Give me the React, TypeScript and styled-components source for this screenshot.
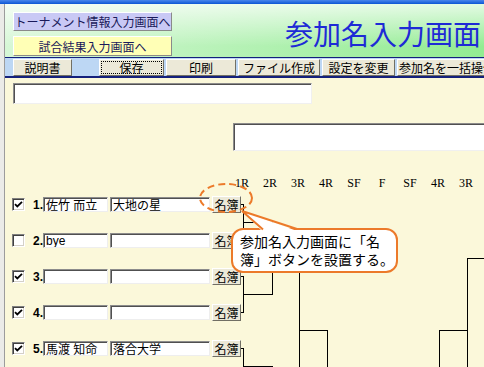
import styled, { createGlobalStyle } from "styled-components";

const GlobalStyle = createGlobalStyle`
  html, body {
    margin: 0;
    padding: 0;
  }
  body {
    width: 484px;
    height: 367px;
    overflow: hidden;
    background: #fbf8da;
    font-family: "Liberation Sans", "Noto Sans CJK JP", sans-serif;
  }
  * {
    box-sizing: border-box;
  }
`;

const JP = `"Liberation Sans", "Noto Sans CJK JP", sans-serif`;
const ORANGE = "#ec7a2a";

const Page = styled.div`
  width: 484px;
  height: 367px;
  display: flex;
  flex-direction: column;
  position: relative;
  overflow: hidden;
`;

const TitleBar = styled.div`
  height: 4px;
  flex-shrink: 0;
  background: linear-gradient(to bottom, #4a86ec, #0b55d4);
`;

const Frame = styled.div`
  flex: 1;
  display: flex;
  min-height: 0;
`;

const SideStrip = styled.div`
  width: 5px;
  flex-shrink: 0;
  background: #ebebe8;
  border-right: 1px solid #9c9c9c;
`;

const Main = styled.div`
  flex: 1;
  min-width: 0;
  display: flex;
  flex-direction: column;
  background: #fbf8da;
`;

// ---------- header ----------
const Header = styled.div`
  height: 53px;
  flex-shrink: 0;
  display: flex;
  justify-content: space-between;
  padding: 8px 3px 0 8px;
  background: linear-gradient(to bottom, rgba(255, 255, 255, 0.75), rgba(255, 255, 255, 0) 80%),
    linear-gradient(to right, #d6f7d6, #92ec92);
`;

const JumpButtons = styled.div`
  display: flex;
  flex-direction: column;
  gap: 5px;
`;

const JumpButton = styled.div<{ $bg: string; $h: number }>`
  width: 159px;
  height: ${(p) => p.$h}px;
  display: flex;
  align-items: center;
  justify-content: center;
  background: ${(p) => p.$bg};
  border: 1px solid;
  border-color: #ffffff #8a8a8a #8a8a8a #ffffff;
  font-family: ${JP};
  font-size: 12px;
  color: #1a1a5a;
  white-space: nowrap;
`;

const Title = styled.h1`
  margin: 7px 0 0 0;
  font-family: "Noto Sans CJK JP", sans-serif;
  font-weight: 400;
  font-size: 28px;
  line-height: 28px;
  color: #1e2ad6;
  white-space: nowrap;
`;

// ---------- toolbar ----------
const Toolbar = styled.div`
  height: 21px;
  flex-shrink: 0;
  display: flex;
  align-items: center;
  gap: 2px;
  padding-left: 8px;
  background: #bdd7f4;
  border-top: 1px solid #14207c;
  border-bottom: 2px solid #14207c;
  overflow: hidden;
`;

const ToolButton = styled.div<{ $w: number; $focus?: boolean; $gapAfter?: number }>`
  width: ${(p) => p.$w}px;
  height: 17px;
  flex-shrink: 0;
  margin-right: ${(p) => p.$gapAfter ?? 0}px;
  display: flex;
  align-items: center;
  justify-content: center;
  background: #ece9d8;
  border: 1px solid;
  border-color: #ffffff #716f64 #716f64 #ffffff;
  font-family: ${JP};
  font-size: 12px;
  color: #000;
  white-space: nowrap;
  outline: ${(p) => (p.$focus ? "1px dotted #000" : "none")};
  outline-offset: -3px;
`;

// ---------- content ----------
const SunkenBox = styled.div<{ $w: number; $h: number }>`
  width: ${(p) => p.$w}px;
  height: ${(p) => p.$h}px;
  flex-shrink: 0;
  background: #fff;
  border: 1px solid;
  border-color: #8c8c8c #f0f0f0 #f0f0f0 #8c8c8c;
  box-shadow: inset 1px 1px #505050;
`;

const TopField = styled(SunkenBox)`
  margin: 5px 0 0 8px;
`;

const RoundsBlock = styled.div`
  margin: 19px 0 0 223px;
  display: flex;
  flex-direction: column;
`;

const RoundField = styled(SunkenBox)`
  margin-left: 5px;
`;

const RoundLabels = styled.div`
  margin-top: 25px;
  height: 14px;
  display: grid;
  grid-template-columns: repeat(9, 28px);
`;

const RoundLabel = styled.span`
  text-align: center;
  font-family: "Liberation Serif", serif;
  font-size: 12px;
  line-height: 14px;
  color: #000;
`;

const Body = styled.div`
  flex: 1;
  min-height: 0;
  display: flex;
`;

const Entries = styled.div`
  width: 236px;
  flex-shrink: 0;
  padding: 6px 0 0 7px;
  display: flex;
  flex-direction: column;
  gap: 19px;
`;

const EntryRow = styled.div`
  height: 17px;
  display: flex;
  align-items: center;
`;

const CheckBox = styled.span`
  width: 13px;
  height: 13px;
  margin-right: 8px;
  flex-shrink: 0;
  display: flex;
  align-items: center;
  justify-content: center;
  background: #fff;
  border: 1px solid;
  border-color: #808080 #ffffff #ffffff #808080;
  box-shadow: inset 1px 1px #404040, inset -1px -1px #d4d0c8;
`;

const EntryNo = styled.span`
  width: 10px;
  flex-shrink: 0;
  font-family: "Liberation Sans", sans-serif;
  font-weight: 700;
  font-size: 12px;
  color: #000;
`;

const TextField = styled.input<{ $w: number }>`
  width: ${(p) => p.$w}px;
  height: 15px;
  flex-shrink: 0;
  margin: 0 2px 0 0;
  padding: 0 0 0 2px;
  background: #fff;
  border: 1px solid;
  border-color: #8c8c8c #eeeeee #eeeeee #8c8c8c;
  box-shadow: inset 1px 1px #505050;
  font-family: ${JP};
  font-size: 12px;
  line-height: 13px;
  color: #000;
  outline: none;
`;

const ListButton = styled.div`
  width: 29px;
  height: 17px;
  flex-shrink: 0;
  display: flex;
  align-items: center;
  justify-content: center;
  background: #ece9d8;
  border: 1px solid;
  border-color: #ffffff #716f64 #716f64 #ffffff;
  font-family: ${JP};
  font-size: 12px;
  color: #000;
`;

const Bracket = styled.svg`
  flex-shrink: 0;
  display: block;
`;

// ---------- overlays ----------
const Callout = styled.div`
  position: absolute;
  left: 231px;
  top: 228px;
  width: 167px;
  height: 45px;
  padding: 2px 0 0 7px;
  background: #fff;
  border: 2px solid ${ORANGE};
  border-radius: 12px;
  font-family: "Noto Sans CJK JP", sans-serif;
  font-size: 14px;
  line-height: 18px;
  color: #000;
  white-space: nowrap;
`;

const CalloutTail = styled.svg`
  position: absolute;
  left: 238px;
  top: 207px;
`;

const Marker = styled.svg`
  position: absolute;
  left: 198px;
  top: 182px;
`;

const entries = [
  { no: 1, checked: true, name: "佐竹 而立", team: "大地の星" },
  { no: 2, checked: false, name: "bye", team: "" },
  { no: 3, checked: true, name: "", team: "" },
  { no: 4, checked: true, name: "", team: "" },
  { no: 5, checked: true, name: "馬渡 知命", team: "落合大学" },
];

const tools = [
  { label: "説明書", w: 59, gapAfter: 25 },
  { label: "保存", w: 65, focus: true },
  { label: "印刷", w: 70 },
  { label: "ファイル作成", w: 82 },
  { label: "設定を変更", w: 73 },
  { label: "参加名を一括操作", w: 100 },
];

const rounds = ["1R", "2R", "3R", "4R", "SF", "F", "SF", "4R", "3R"];

// bracket lines, in page coordinates
const bracketPath = [
  // row stubs + first round pairs
  "M241 204.5H243.5M241 240.5H243.5M241 276.5H243.5M241 312.5H243.5M241 348.5H243.5",
  "M243.5 204.5V240.5M243.5 222.5H272.5",
  "M243.5 276.5V312.5M243.5 294.5H272.5",
  "M243.5 348.5V384.5M243.5 366.5H272.5",
  // second / third round
  "M272.5 222.5V294.5M272.5 258.5H299.5",
  "M299.5 258.5V402.5M299.5 330.5H327.5",
  "M327.5 330.5V620",
  // right half
  "M484 258.5H467.5V402.5H484",
  "M467.5 330.5H439.5V620",
].join("");

const Check = () => (
  <svg width="9" height="9" viewBox="0 0 9 9">
    <path d="M1 4.2L3.3 6.5L8 1.8" fill="none" stroke="#000" strokeWidth="1.8" />
  </svg>
);

export default function App() {
  return (
    <Page>
      <GlobalStyle />
      <TitleBar />
      <Frame>
        <SideStrip />
        <Main>
          <Header>
            <JumpButtons>
              <JumpButton $bg="#c9c9f5" $h={19}>トーナメント情報入力画面へ</JumpButton>
              <JumpButton $bg="#ffffb6" $h={20}>試合結果入力画面へ</JumpButton>
            </JumpButtons>
            <Title>参加名入力画面</Title>
          </Header>

          <Toolbar>
            {tools.map((t) => (
              <ToolButton key={t.label} $w={t.w} $focus={t.focus} $gapAfter={t.gapAfter}>
                {t.label}
              </ToolButton>
            ))}
          </Toolbar>

          <TopField $w={299} $h={21} />

          <RoundsBlock>
            <RoundField $w={260} $h={28} />
            <RoundLabels>
              {rounds.map((r, i) => (
                <RoundLabel key={i}>{r}</RoundLabel>
              ))}
            </RoundLabels>
          </RoundsBlock>

          <Body>
            <Entries>
              {entries.map((e) => (
                <EntryRow key={e.no}>
                  <CheckBox>{e.checked && <Check />}</CheckBox>
                  <EntryNo>{e.no}.</EntryNo>
                  <TextField $w={65} readOnly value={e.name} />
                  <TextField $w={100} readOnly value={e.team} />
                  <ListButton>名簿</ListButton>
                </EntryRow>
              ))}
            </Entries>
            <Bracket width="243" height="177" shapeRendering="crispEdges">
              <g transform="translate(-241 -190)">
                <path d={bracketPath} fill="none" stroke="#000" strokeWidth="1" />
              </g>
            </Bracket>
          </Body>
        </Main>
      </Frame>

      <Marker width="56" height="32">
        <ellipse cx="28" cy="16" rx="26" ry="14" fill="none" stroke={ORANGE} strokeWidth="2" strokeDasharray="7 4" />
      </Marker>

      <Callout>
        参加名入力画面に「名
        <br />
        簿」ボタンを設置する。
      </Callout>
      <CalloutTail width="64" height="26">
        <polygon points="4,4 24,24 59,24" fill="#fff" />
        <polyline points="25,22.5 4,4 59,22" fill="none" stroke={ORANGE} strokeWidth="2" strokeLinejoin="miter" />
      </CalloutTail>
    </Page>
  );
}
